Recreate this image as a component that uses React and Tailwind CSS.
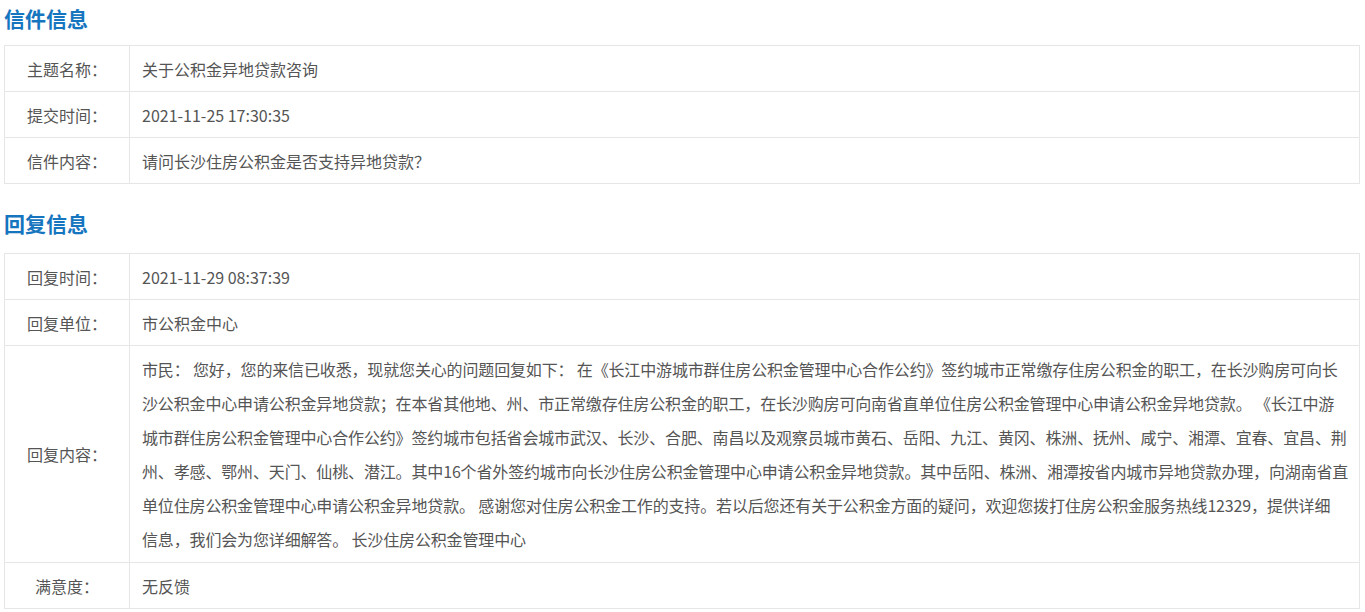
import React from "react";

const font = { fontFamily: '"Microsoft YaHei", "Noto Sans CJK SC", "Noto Sans", sans-serif' };

function Row({ label, children, last, multi }) {
  return (
    <div className={`flex border-t border-[#e6e6e6] ${last ? "border-b" : ""}`}>
      <div className="w-[126px] shrink-0 border-l border-r border-[#e6e6e6] flex items-center justify-center min-h-[45px] text-[16px] text-[#555]">
        {label}
      </div>
      <div
        className={`flex-1 min-w-0 border-r border-[#e6e6e6] flex items-center min-h-[45px] pl-[12px] pr-[2px] text-[16px] text-[#555] ${
          multi ? "py-[6px] leading-[34px] tracking-[-0.15px]" : ""
        }`}
      >
        <div>{children}</div>
      </div>
    </div>
  );
}

const lines = [
  "市民： 您好，您的来信已收悉，现就您关心的问题回复如下： 在《长江中游城市群住房公积金管理中心合作公约》签约城市正常缴存住房公积金的职工，在长沙购房可向长",
  "沙公积金中心申请公积金异地贷款；在本省其他地、州、市正常缴存住房公积金的职工，在长沙购房可向南省直单位住房公积金管理中心申请公积金异地贷款。 《长江中游",
  "城市群住房公积金管理中心合作公约》签约城市包括省会城市武汉、长沙、合肥、南昌以及观察员城市黄石、岳阳、九江、黄冈、株洲、抚州、咸宁、湘潭、宜春、宜昌、荆",
  "州、孝感、鄂州、天门、仙桃、潜江。其中16个省外签约城市向长沙住房公积金管理中心申请公积金异地贷款。其中岳阳、株洲、湘潭按省内城市异地贷款办理，向湖南省直",
  "单位住房公积金管理中心申请公积金异地贷款。 感谢您对住房公积金工作的支持。若以后您还有关于公积金方面的疑问，欢迎您拨打住房公积金服务热线12329，提供详细",
  "信息，我们会为您详细解答。 长沙住房公积金管理中心",
];

export default function App() {
  return (
    <div className="bg-white w-full min-h-[612px] px-[4px] pr-[5px]" style={font}>
      <h2 className="h-[37px] leading-[37px] mb-[8px] text-[21px] font-bold text-[#1575be]">信件信息</h2>
      <div>
        <Row label="主题名称：">关于公积金异地贷款咨询</Row>
        <Row label="提交时间：">2021-11-25 17:30:35</Row>
        <Row label="信件内容：" last>
          请问长沙住房公积金是否支持异地贷款？
        </Row>
      </div>
      <h2 className="mt-[21px] h-[37px] leading-[37px] mb-[11px] text-[21px] font-bold text-[#1575be]">回复信息</h2>
      <div>
        <Row label="回复时间：">2021-11-29 08:37:39</Row>
        <Row label="回复单位：">市公积金中心</Row>
        <Row label="回复内容：" multi>
          {lines.map((l, i) => (
            <span key={i} className="block whitespace-nowrap">
              {l}
            </span>
          ))}
        </Row>
        <Row label="满意度：" last>
          无反馈
        </Row>
      </div>
    </div>
  );
}
